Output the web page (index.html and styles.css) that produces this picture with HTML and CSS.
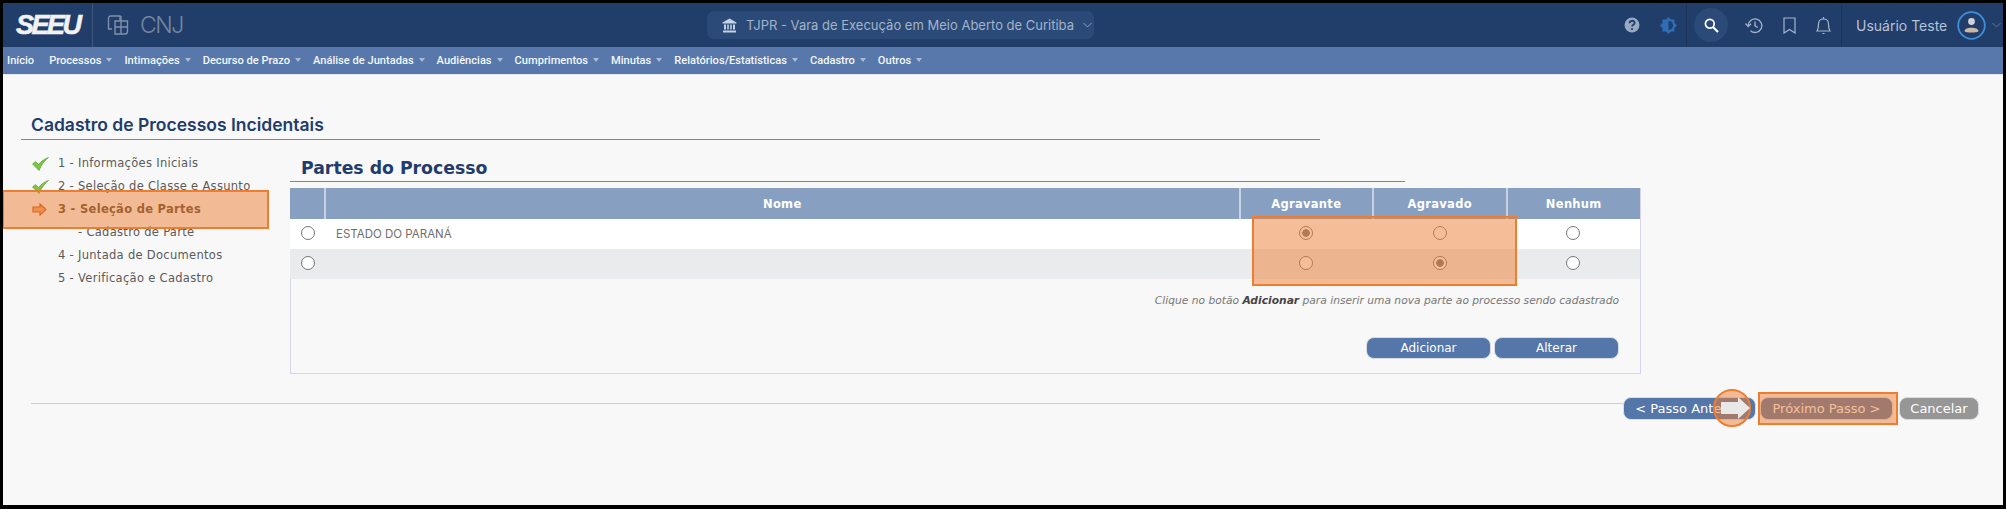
FILE: index.html
```html
<!DOCTYPE html>
<html lang="pt-BR">
<head>
    <meta charset="UTF-8">
    <title>SEEU - Cadastro de Processos Incidentais</title>
    <link rel="stylesheet" href="styles.css">
</head>
<body>
<div class="page">
    <header class="topbar">
        <div class="brand">
            <span class="seeu-logo">SEEU</span>
        </div>
        <div class="cnj">
            <svg class="cnj-icon" width="22" height="20" viewBox="0 0 22 20" fill="none" stroke="#7f90aa" stroke-width="1.4">
                <path d="M5 14H1.5V3.5Q1.5 1 4 1H13V6"/>
                <path d="M8 6H20.5V16Q20.5 19 18 19H8Z"/>
                <path d="M14 1V19M8 12H20"/>
            </svg>
            <span class="cnj-text">CNJ</span>
        </div>
        <div class="topbar-center">
            <button class="unit-select">
                <svg width="15" height="15" viewBox="0 0 15 15" fill="#c4d2e6">
                    <path d="M7.5 0.5L14.5 4.5V5.5H0.5V4.5Z"/>
                    <path d="M2 6.5H4V11.5H2ZM5.2 6.5H6.8V11.5H5.2ZM8.2 6.5H9.8V11.5H8.2ZM11 6.5H13V11.5H11Z"/>
                    <path d="M1 12.5H14V14.5H1Z"/>
                </svg>
                <span>TJPR - Vara de Execução em Meio Aberto de Curitiba</span>
                <svg width="9" height="6" viewBox="0 0 9 6" fill="none" stroke="#8ea1bd" stroke-width="1"><path d="M0.5 1L4.5 5L8.5 1"/></svg>
            </button>
        </div>
        <div class="tools tools-help">
            <svg width="16" height="16" viewBox="0 0 16 16"><circle cx="8" cy="8" r="7.5" fill="#98a9c2"/><path d="M5.5 6.2C5.6 3 10.6 3 10.6 6C10.6 7.8 8 7.8 8 9.6" fill="none" stroke="#213d6a" stroke-width="1.8"/><circle cx="8" cy="12" r="1.1" fill="#213d6a"/></svg>
            <svg width="17" height="17" viewBox="0 0 17 17"><path d="M8.5 0L11 2.5H14.5V6L17 8.5L14.5 11V14.5H11L8.5 17L6 14.5H2.5V11L0 8.5L2.5 6V2.5H6Z" fill="#2f6db5"/><path d="M8.5 4A4.5 4.5 0 0 1 8.5 13Z" fill="#213d6a"/></svg>
        </div>
        <div class="tools tools-main">
            <span class="search-btn">
                <svg width="15" height="15" viewBox="0 0 15 15" fill="none" stroke="#fff" stroke-width="1.7"><circle cx="5.8" cy="5.8" r="4.4"/><path d="M9 9L14 14" stroke-width="2.2"/></svg>
            </span>
            <svg width="18" height="17" viewBox="0 0 18 17" fill="none" stroke="#a5b4ca" stroke-width="1.3"><path d="M3.2 8.5A6.8 6.8 0 1 1 5.5 13.8"/><path d="M0.5 6.5L3.2 9.5L6 6.7"/><path d="M10 4.5V8.8L12.8 10.5"/></svg>
            <svg width="13" height="17" viewBox="0 0 13 17" fill="none" stroke="#a5b4ca" stroke-width="1.2"><path d="M1 1H12V16L6.5 12.5L1 16Z"/></svg>
            <svg width="15" height="19" viewBox="0 0 15 19" fill="none" stroke="#a5b4ca" stroke-width="1.2"><path d="M1 15H14C12.5 13 12.5 11 12.5 8C12.5 5 10.5 3 7.5 3C4.5 3 2.5 5 2.5 8C2.5 11 2.5 13 1 15Z"/><path d="M7.5 1V3M6.5 17.5H8.5"/></svg>
        </div>
        <div class="user">
            <span>Usuário Teste</span>
            <svg width="29" height="29" viewBox="0 0 29 29"><circle cx="14.5" cy="14.5" r="13.3" fill="none" stroke="#3f8fd8" stroke-width="1.8"/><circle cx="14.5" cy="10.5" r="3.4" fill="#cfd3d6"/><path d="M7.5 20C7.5 15.5 21.5 15.5 21.5 20C21.5 22 7.5 22 7.5 20Z" fill="#c9b9a4"/></svg>
            <svg width="9" height="6" viewBox="0 0 9 6" fill="none" stroke="#64799c" stroke-width="1"><path d="M0.5 1L4.5 5L8.5 1"/></svg>
        </div>
    </header>

    <nav class="menu">
        <a>Início</a>
        <a class="has-sub">Processos</a>
        <a class="has-sub">Intimações</a>
        <a class="has-sub">Decurso de Prazo</a>
        <a class="has-sub">Análise de Juntadas</a>
        <a class="has-sub">Audiências</a>
        <a class="has-sub">Cumprimentos</a>
        <a class="has-sub">Minutas</a>
        <a class="has-sub">Relatórios/Estatísticas</a>
        <a class="has-sub">Cadastro</a>
        <a class="has-sub">Outros</a>
    </nav>

    <main class="content">
        <h1 class="page-title">Cadastro de Processos Incidentais</h1>
        <div class="wizard">
            <ul class="steps">
                <li>
                    <svg class="step-icon" width="17" height="14" viewBox="0 0 17 14"><path d="M0.5 7L3.5 4.5L6.5 7.5C9 4.5 12 2 16.5 0.5C12.5 3.5 9.5 8 7 13.5Z" fill="#7cc644" stroke="#4c9a2a" stroke-width="0.6"/></svg>
                    1 - Informações Iniciais
                </li>
                <li>
                    <svg class="step-icon" width="17" height="14" viewBox="0 0 17 14"><path d="M0.5 7L3.5 4.5L6.5 7.5C9 4.5 12 2 16.5 0.5C12.5 3.5 9.5 8 7 13.5Z" fill="#7cc644" stroke="#4c9a2a" stroke-width="0.6"/></svg>
                    2 - Seleção de Classe e Assunto
                </li>
                <li class="current">
                    <svg class="step-icon" width="15" height="13" viewBox="0 0 15 13"><path d="M1 4H8V1L14 6.5L8 12V9H1Z" fill="#f7a060" stroke="#c8551a" stroke-width="1.2"/></svg>
                    3 - Seleção de Partes
                </li>
                <li class="sub">- Cadastro de Parte</li>
                <li class="todo">4 - Juntada de Documentos</li>
                <li class="todo">5 - Verificação e Cadastro</li>
            </ul>

            <section class="parts">
                <h2 class="parts-title">Partes do Processo</h2>
                <div class="parts-panel">
                    <table class="parts-table">
                        <thead>
                            <tr>
                                <th class="col-select"></th>
                                <th>Nome</th>
                                <th class="col-role">Agravante</th>
                                <th class="col-role">Agravado</th>
                                <th class="col-role">Nenhum</th>
                            </tr>
                        </thead>
                        <tbody>
                            <tr>
                                <td class="center"><span class="radio"></span></td>
                                <td class="name">ESTADO DO PARANÁ</td>
                                <td class="center"><span class="radio checked"></span></td>
                                <td class="center"><span class="radio"></span></td>
                                <td class="center"><span class="radio"></span></td>
                            </tr>
                            <tr class="alt">
                                <td class="center"><span class="radio"></span></td>
                                <td class="name"></td>
                                <td class="center"><span class="radio"></span></td>
                                <td class="center"><span class="radio checked"></span></td>
                                <td class="center"><span class="radio"></span></td>
                            </tr>
                        </tbody>
                    </table>
                    <p class="hint">Clique no botão <b>Adicionar</b> para inserir uma nova parte ao processo sendo cadastrado</p>
                    <div class="panel-buttons">
                        <button class="btn btn-blue btn-panel">Adicionar</button>
                        <button class="btn btn-blue btn-panel">Alterar</button>
                    </div>
                </div>
            </section>
        </div>

        <div class="actions">
            <div class="actions-line"></div>
            <button class="btn btn-blue btn-step">&lt; Passo Anterior</button>
            <button class="btn btn-blue btn-step">Próximo Passo &gt;</button>
            <button class="btn btn-gray">Cancelar</button>
        </div>
    </main>

    <!-- callouts drawn over the screenshot -->
    <div class="mark mark-step"></div>
    <div class="mark mark-radios"></div>
    <div class="mark mark-next"></div>
    <div class="mark-circle">
        <svg width="29" height="22" viewBox="0 0 29 22"><path d="M0 5H17V0L29 11L17 22V17H0Z" fill="#e8e8e8"/></svg>
    </div>
</div>
</body>
</html>
```

FILE: styles.css
```css
* {
    box-sizing: border-box;
}
html, body {
    margin: 0;
    padding: 0;
}
body {
    font-family: "DejaVu Sans", sans-serif;
    background-color: #f8f8f8;
}
.page {
    position: relative;
    width: 2006px;
    height: 509px;
    border: 3px solid #000;
    border-bottom-width: 4px;
    background: #f8f8f8;
    overflow: hidden;
}

/* top bar */
.topbar {
    display: flex;
    align-items: center;
    height: 44px;
    background: #213d6a;
    font-family: Inter, sans-serif;
}
.brand {
    display: flex;
    align-items: center;
    width: 90px;
    height: 44px;
    padding-left: 13px;
    border-right: 1px solid #3e5880;
}
.seeu-logo {
    color: #f2f2f2;
    font-family: "Liberation Sans", sans-serif;
    font-weight: 700;
    font-style: italic;
    font-size: 27px;
    letter-spacing: -2.5px;
    -webkit-text-stroke: 0.6px #f2f2f2;
}
.cnj {
    display: flex;
    align-items: center;
    width: 100px;
    padding-left: 14px;
    gap: 11px;
}
.cnj-text {
    color: #75879f;
    font-size: 23px;
    font-weight: 300;
    letter-spacing: -1.5px;
}
.topbar-center {
    width: 387px;
    margin-left: 514px;
}
.unit-select {
    display: flex;
    align-items: center;
    width: 387px;
    height: 28px;
    padding: 0 0 0 15px;
    gap: 9px;
    background: #2b4a78;
    border: none;
    border-radius: 7px;
    color: #a4b4ca;
    font-family: Inter, sans-serif;
    font-size: 13px;
    white-space: nowrap;
}
.tools {
    display: flex;
    align-items: center;
}
.tools-help {
    margin-left: 530px;
    width: 63px;
    height: 44px;
    gap: 20px;
    border-right: 1px solid #1b3358;
}
.tools-main {
    width: 155px;
    height: 44px;
    padding-left: 7px;
    gap: 20px;
    border-right: 1px solid #1b3358;
}
.search-btn {
    display: flex;
    align-items: center;
    justify-content: center;
    width: 34px;
    height: 34px;
    margin-right: -12px;
    border-radius: 50%;
    background: #2b4a78;
}
.tools-main > svg:nth-child(2) {
    margin-left: 9px;
}
.user {
    display: flex;
    align-items: center;
    padding-left: 14px;
    gap: 10px;
    color: #b5c3d8;
    font-size: 14px;
}
.user svg:last-child {
    margin-left: -4px;
}

/* menu */
.menu {
    display: flex;
    align-items: center;
    height: 28px;
    padding-left: 4px;
    background: #5878ab;
    border-bottom: 1px solid #e4e8ef;
    font-family: Roboto, sans-serif;
    font-size: 11.1px;
    font-weight: 500;
    color: #f4f6fa;
}
.menu a {
    margin-right: 15px;
    white-space: nowrap;
}
.menu a.has-sub {
    margin-right: 12px;
}
.menu a.has-sub::after {
    content: "";
    display: inline-block;
    margin-left: 5px;
    vertical-align: 2px;
    border-left: 3.5px solid transparent;
    border-right: 3.5px solid transparent;
    border-top: 4px solid #a9bbd6;
}

/* page title */
.content {
    padding-top: 38px;
}
.page-title {
    width: 1299px;
    height: 27px;
    margin: 0 0 0 18px;
    padding: 1px 0 0 10px;
    border-bottom: 1px solid #7c8791;
    font-family: Inter, sans-serif;
    font-size: 17.5px;
    line-height: 22px;
    font-weight: 600;
    color: #1f3d6b;
}

/* wizard */
.wizard {
    display: flex;
}
.steps {
    width: 287px;
    margin: 12px 0 0;
    padding: 0;
    list-style: none;
    font-size: 11.5px;
    color: #5a5a5a;
}
.steps li {
    position: relative;
    height: 23px;
    line-height: 23px;
    padding-left: 55px;
    letter-spacing: 0.3px;
    white-space: nowrap;
}
.step-icon {
    position: absolute;
    left: 29px;
    top: 5px;
}
.steps .current {
    font-weight: 700;
    color: #57452f;
}
.steps .sub {
    padding-left: 75px;
}
.parts {
    width: 1351px;
}
.parts-title {
    width: 1115px;
    height: 35px;
    margin: 7px 0 6px;
    padding: 8px 0 0 11px;
    border-bottom: 1px solid #7c8791;
    font-size: 17.3px;
    line-height: 26px;
    font-weight: 700;
    color: #1f3d6b;
}
.parts-panel {
    width: 1351px;
    height: 186px;
    border: 1px solid #d4d4ea;
    border-top: none;
}
.parts-table {
    width: 1350px;
    border-collapse: collapse;
    table-layout: fixed;
    margin-left: -1px;
    font-size: 12px;
}
.parts-table th {
    height: 31px;
    padding: 0;
    background: #87a0c2;
    color: #fff;
    font-size: 11.5px;
    font-weight: 700;
    letter-spacing: 0.3px;
    border-left: 2px solid #c6d2e2;
}
.parts-table th:first-child {
    border-left: none;
}
.parts-table .col-select {
    width: 35px;
}
.parts-table .col-role {
    width: 133.5px;
}
.parts-table td {
    height: 30px;
    padding: 0;
    background: #fff;
}
.parts-table .alt td {
    background: #eaebed;
}
.center {
    text-align: center;
}
.parts-table .name {
    padding-left: 11px;
    font-family: Inter, sans-serif;
    font-size: 11.5px;
    color: #6f6f6f;
}
.radio {
    display: inline-block;
    width: 14px;
    height: 14px;
    margin-top: 1px;
    border: 1px solid #777;
    border-radius: 50%;
    background: #fff;
}
.radio.checked {
    background: radial-gradient(circle, #777 0, #777 3.5px, #fff 4px);
}
.hint {
    margin: 15px 21px 0 0;
    text-align: right;
    font-size: 10.7px;
    font-style: italic;
    color: #777;
}
.hint b {
    color: #444;
}
.panel-buttons {
    display: flex;
    justify-content: flex-end;
    gap: 3px;
    margin: 30px 21px 0 0;
}

/* buttons */
.btn {
    height: 23px;
    padding: 0;
    border: 1px solid #d8dde6;
    border-radius: 8px;
    color: #fff;
    font-family: "DejaVu Sans", sans-serif;
    font-size: 12px;
}
.btn-blue {
    background: #5576a9;
}
.btn-gray {
    width: 80px;
    margin-left: 2px;
    background: #969696;
    font-size: 13px;
}
.btn-panel {
    width: 125px;
    height: 22px;
}
.btn-step {
    width: 133px;
    font-size: 13px;
}

/* bottom actions */
.actions {
    display: flex;
    gap: 4px;
    margin: 23px 0 0 28px;
    width: 1948px;
}
.actions-line {
    flex: 1;
    height: 1px;
    margin: 6px -4px 0 0;
    background: #cfcfc8;
}

/* orange callouts */
.mark {
    position: absolute;
    background: rgba(237, 125, 49, 0.5);
    border: 2px solid #ed7d31;
}
.mark-step {
    left: -1px;
    top: 187px;
    width: 267px;
    height: 39px;
}
.mark-radios {
    left: 1249px;
    top: 213px;
    width: 265px;
    height: 70px;
}
.mark-next {
    left: 1755px;
    top: 389px;
    width: 140px;
    height: 33px;
}
.mark-circle {
    position: absolute;
    left: 1710px;
    top: 386px;
    width: 38px;
    height: 38px;
    display: flex;
    align-items: center;
    justify-content: center;
    border: 2px solid #ed7d31;
    border-radius: 50%;
    background: rgba(237, 125, 49, 0.5);
}
.mark-circle svg {
    margin-left: 6px;
    flex: none;
}
```
